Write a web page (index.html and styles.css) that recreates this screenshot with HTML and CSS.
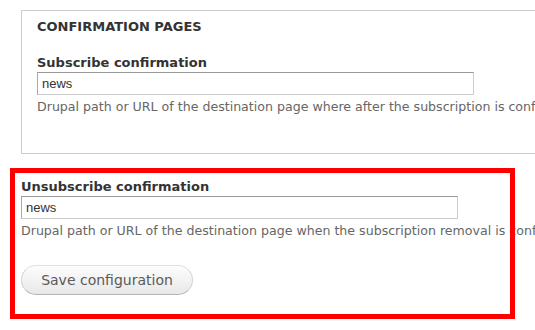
FILE: index.html
```html
<!DOCTYPE html>
<html lang="en">
    <head>
        <meta charset="UTF-8">
        <title>Newsletter settings</title>
        <link rel="stylesheet" href="styles.css">
    </head>
    <body>
        <form class="settings" method="POST" action="/admin/config">
            <div class="group">
                <div class="legend">CONFIRMATION PAGES</div>
                <div class="item">
                    <label for="subscribe">Subscribe confirmation</label>
                    <input class="text" type="text" id="subscribe" name="subscribe" value="news">
                    <div class="description">Drupal path or URL of the destination page where after the subscription is confirmed.</div>
                </div>
            </div>
            <div class="item outside">
                <label for="unsubscribe">Unsubscribe confirmation</label>
                <input class="text" type="text" id="unsubscribe" name="unsubscribe" value="news">
                <div class="description">Drupal path or URL of the destination page when the subscription removal is confirmed.</div>
            </div>
            <div class="actions">
                <input class="btn" type="submit" value="Save configuration">
            </div>
        </form>
        <div class="highlight"></div>
    </body>
</html>
```

FILE: styles.css
```css
body{
    margin: 0;
    background-color: white;
    overflow: hidden;
    font-family: "DejaVu Sans", sans-serif;
    color: #333;
}
.settings{
    padding: 10px 0 0 21px;
    width: 700px;
}
.group{
    border: 1px solid #ccc;
    border-right: none;
    padding: 8px 0 39px 15px;
}
.legend{
    font-size: 13px;
    line-height: 15px;
    font-weight: bold;
    margin-bottom: 21px;
}
label{
    display: block;
    font-size: 13px;
    line-height: 15px;
    font-weight: bold;
    margin-bottom: 2px;
}
input.text{
    display: block;
    box-sizing: border-box;
    width: 437px;
    height: 23px;
    margin: 0;
    padding: 2px 4px;
    border: 1px solid #ccc;
    border-top-color: #999;
    border-left-color: #aaa;
    font-family: "Liberation Sans", sans-serif;
    font-size: 13px;
    color: #333;
    background-color: white;
}
.description{
    margin-top: 5px;
    font-size: 12.6px;
    line-height: 14px;
    color: #666;
    white-space: nowrap;
}
.item.outside{
    margin-top: 25px;
}
.actions{
    margin-top: 27px;
}
input.btn{
    box-sizing: border-box;
    height: 30px;
    width: 172px;
    margin: 0;
    padding: 0;
    border: 1px solid #e0e0e0;
    border-bottom-color: #b4b4b4;
    border-left-color: #d2d2d2;
    border-right-color: #d2d2d2;
    border-radius: 20px;
    background: linear-gradient(#fdfdfd, #e8e8e8);
    font-family: "DejaVu Sans", sans-serif;
    font-size: 14px;
    color: #5a5a5a;
    cursor: pointer;
}
.highlight{
    position: absolute;
    left: 10px;
    top: 168px;
    width: 495px;
    height: 141px;
    border: 5px solid red;
}
```
